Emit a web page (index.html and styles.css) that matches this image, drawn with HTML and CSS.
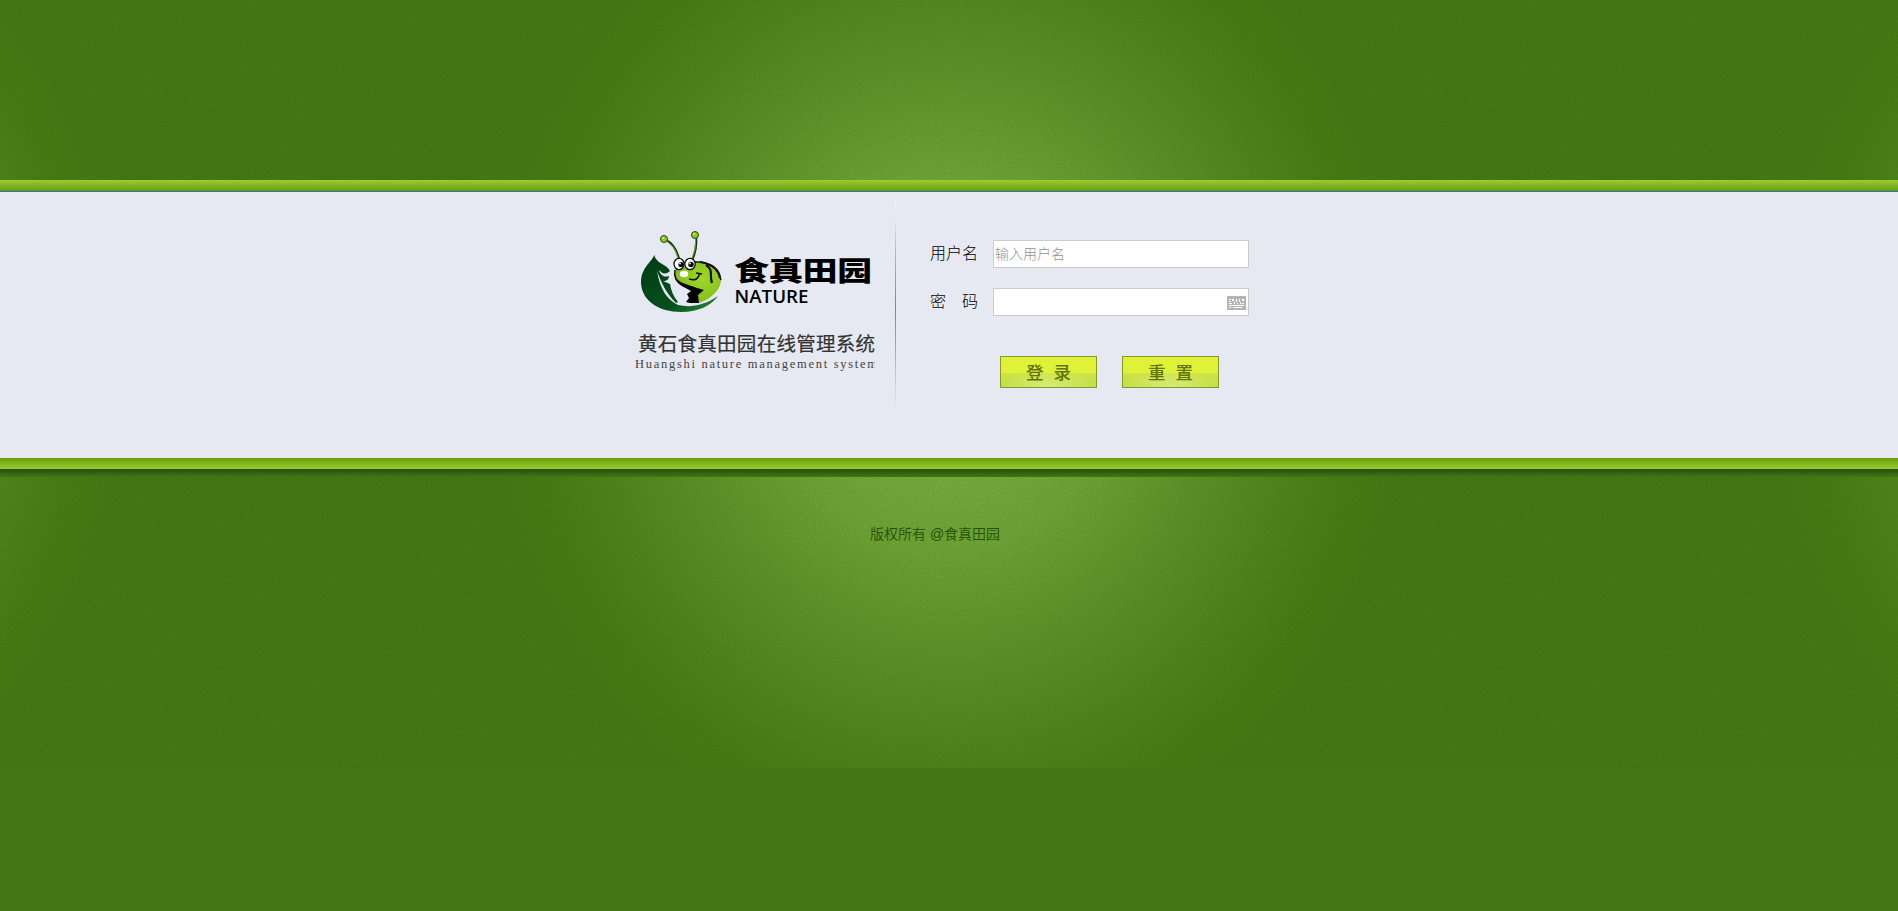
FILE: index.html
```html
<!DOCTYPE html>
<html lang="zh-CN">
<head>
<meta charset="utf-8">
<title>黄石食真田园在线管理系统</title>
<link rel="stylesheet" href="styles.css">
</head>
<body>
<svg class="grain" width="1898" height="768" aria-hidden="true">
  <filter id="grain" x="0" y="0" width="100%" height="100%" color-interpolation-filters="sRGB">
    <feTurbulence type="fractalNoise" baseFrequency="0.6" numOctaves="2" seed="4"/>
    <feColorMatrix values="0 0 0 0 0.1  0 0 0 0 0.25  0 0 0 0 0  1.4 0 0 0 -0.5"/>
  </filter>
  <rect width="1898" height="768" filter="url(#grain)" opacity=".16"/>
</svg>
<div class="page">
  <main class="band">
    <div class="band-top"></div>
    <div class="panel">
      <svg class="brand" width="250" height="160" viewBox="0 0 250 160">
        <defs>
          <linearGradient id="leaf" x1="0" y1="0" x2="1" y2="1"><stop offset="0" stop-color="#003b12"/><stop offset=".65" stop-color="#07501e"/><stop offset="1" stop-color="#2c9136"/></linearGradient>
          <radialGradient id="skin" cx=".6" cy=".4" r=".7"><stop offset="0" stop-color="#a0d52a"/><stop offset="1" stop-color="#7cbd18"/></radialGradient>
          <clipPath id="tagline"><rect x="0" y="130" width="249.5" height="30"/></clipPath>
        </defs>
        <path fill="url(#leaf)" d="M29.300 35C25 44 16 48 16 63C17 81 34 92 56 92C74 92 87 85 93 76C80 85 66 88 53 85C42 80 35 69 32 51C36 62 41 73 51 83L53 82C48 76 46 70 45 64L38 61C42 61 44 59 44 56C38 58 35 54 34 50C38 55 42 54 45 51C42 44 31 44 29.300 35Z"/>
        <path fill="url(#skin)" d="M51 47C49 53 50 60 55 63L71 69L74 83C88 78 97 68 96 58C93 48 81 40 68 43Z"/>
        <path fill="none" stroke="#111" stroke-width="1.500" d="M50 50C49 56 51 61 56 63L69 68M70 42C84 41 93 49 96 60"/>
        <path fill="#000" d="M50 59C57 66 65 65 72 68L79 70L73 75L74 83L65 83L61 82L64 78L62 74L66 71C59 67 53 65 50 59Z"/>
        <path fill="none" stroke="#111" stroke-width="2.200" d="M81 45C89 50 84 55 87 63M75 42C88 44 94 50 95 58"/>
        <path fill="none" stroke="#111" stroke-width="1.500" d="M64 59C70 61 74 59 74.500 53M71 53L77 54"/>
        <path fill="none" stroke="#222c12" stroke-width="2.200" d="M41 20C49 24 52 31 54 39M71 17C72 27 70 34 67 40"/>
        <path fill="none" stroke="#7cba1a" stroke-width=".9" d="M41 20.500C48 25 51 31 53 38M70.500 18C71 27 69 34 66.500 39"/>
        <circle cx="39" cy="19" r="3.500" fill="#8fc81c" stroke="#254b0c" stroke-width="1"/>
        <circle cx="70" cy="15" r="3.500" fill="#8fc81c" stroke="#254b0c" stroke-width="1"/>
        <circle cx="38" cy="18" r="1" fill="#d8efa0"/><circle cx="69" cy="14" r="1" fill="#d8efa0"/>
        <ellipse cx="54" cy="44" rx="5" ry="5.700" fill="#fff" stroke="#111" stroke-width="1.300"/>
        <ellipse cx="65" cy="44" rx="5.200" ry="5.700" fill="#fff" stroke="#111" stroke-width="1.300"/>
        <circle cx="56" cy="44.500" r="2.600"/><circle cx="66" cy="44.500" r="2.700"/>
        <circle cx="55" cy="43.500" r=".9" fill="#fff"/><circle cx="65" cy="43.500" r=".9" fill="#fff"/>
        <ellipse cx="59" cy="54" rx="4.200" ry="3.200" fill="#fff"/>
        <text class="logo-cn" transform="translate(109 61) scale(1.200 .94)" textLength="115" lengthAdjust="spacing">食真田园</text>
        <text class="logo-en" x="109.500" y="82.500" textLength="74" lengthAdjust="spacingAndGlyphs">NATURE</text>
        <text class="title" x="13" y="131" textLength="237" lengthAdjust="spacing">黄石食真田园在线管理系统</text>
        <text class="subtitle" x="10" y="148" textLength="242" lengthAdjust="spacing" clip-path="url(#tagline)">Huangshi nature management system</text>
      </svg>
      <div class="divider"></div>
      <form class="login">
        <label class="row"><span class="name">用户名</span><input class="field" type="text" placeholder="输入用户名"></label>
        <label class="row"><span class="name">密　码</span>
          <span class="field password">
            <svg width="19" height="14" viewBox="0 0 19 14"><path fill="#b5b5b5" d="M0 0h19v14H0z"/><path fill="#fff" d="M2 3h2v1H2zM5 3h2v2H5zM9 3h1v3H9zM12 3h1v3h-1zM15 3h2v2h-2zM2 5h2v1H2zM2 7h3v1H2zM7 6h1v2H7zM10 7h1v1h-1zM13 6h1v2h-1zM15 7h2v1h-2zM2 9h15v1H2zM2 11h2v1H2zM6 11h9v1H6z"/></svg>
          </span>
        </label>
        <div class="actions"><button class="btn" type="button">登 录</button><button class="btn" type="button">重 置</button></div>
      </form>
    </div>
    <div class="band-bottom"></div>
    <div class="shadow"></div>
  </main>
  <footer class="copyright">版权所有 @食真田园</footer>
</div>
</body>
</html>
```
FILE: styles.css
```css
* { box-sizing: border-box; }

body {
  margin: 0;
  min-height: 911px;
  overflow: hidden;
  background-color: #437614;
  background-image: radial-gradient(ellipse 460px 510px at 50% 47%,
    #7ab043 0, #76ab40 20%, #6ba136 38%, #5b9028 58%, #4d821b 78%, #467b14 90%, #447813 100%);
  background-size: 1280px 768px;
  background-position: 50% 0;
  background-repeat: repeat-x;
  font-family: "Liberation Sans", "Noto Sans CJK SC", sans-serif;
}

.grain { position: absolute; top: 0; left: 0; }

.page { position: relative; padding-top: 180px; }

.band-top {
  height: 12px;
  border-bottom: 1px solid #2478a8;
  background: linear-gradient(#9acd32, #699b10);
}

.panel {
  display: flex;
  height: 266px;
  padding-left: 625px;
  background: #e6e9f1;
}

.brand { display: block; margin-top: 28px; }

.logo-cn { font: 900 29px "Noto Sans CJK SC", sans-serif; }
.logo-en { font: 600 18px "Open Sans", sans-serif; }
.title { font: 400 19.500px "Noto Sans CJK SC", sans-serif; fill: #333; stroke: #333; stroke-width: .2px; }
.subtitle { font: 12.500px "Liberation Serif", serif; fill: #444; }

.divider {
  width: 1px;
  height: 215px;
  margin: 8px 0 0 20px;
  background: linear-gradient(#f0f2f6, #e5e8f1 9%, #b7bbc2 22%, #7f838a 50%, #a5a9b0 70%, #e5e8f1 96%);
}

.login { padding: 48px 0 0 34px; }

.row { display: flex; align-items: center; height: 28px; margin-bottom: 20px; }

.name {
  width: 63px;
  padding-bottom: 3px;
  color: #000;
  font: 300 16px/25px "Noto Sans CJK SC", sans-serif;
}

.field {
  width: 256px;
  height: 28px;
  padding: 0 1px 2px;
  border: 1px solid #ccc;
  background: #fff;
  font: 300 14px "Noto Sans CJK SC", sans-serif;
}
.field::placeholder { color: #909090; opacity: 1; }

.password { display: flex; align-items: center; justify-content: flex-end; padding: 2px 2px 0 0; }

.actions { display: flex; gap: 25px; padding: 20px 0 0 70px; }

.btn {
  width: 97px;
  height: 32px;
  padding: 0 0 1px;
  border: 1px solid #87992b;
  background:
    radial-gradient(ellipse 50px 16px at 50% 100%, rgba(225, 240, 140, .75), transparent),
    linear-gradient(#dff237 0, #dff23a 53%, #cee548 54%, #c0dc43 100%);
  color: #5f7406;
  font: 500 17.500px "Noto Sans CJK SC", sans-serif;
  line-height: 27px;
  word-spacing: 6px;
}

.band-bottom { height: 11px; background: linear-gradient(#6d9e0b, #97ca30); }

.shadow { height: 8px; background: linear-gradient(#274f0a, #315e0d 40%, #437514); }

.copyright {
  padding: 46px 0 0 870px;
  color: #285002;
  font: 350 14px/22px "Liberation Sans", "Noto Sans CJK SC", sans-serif;
}
```
